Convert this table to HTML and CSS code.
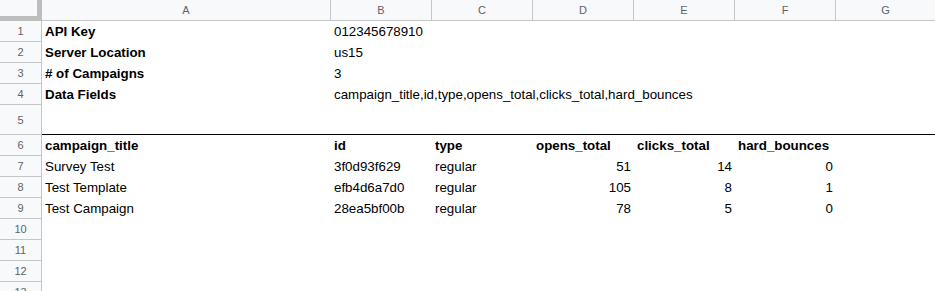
FILE: index.html
```html
<!DOCTYPE html>
<html lang="en">
<head>
    <meta charset="UTF-8">
    <meta name="viewport" content="width=device-width, initial-scale=1.0">
    <title>Campaign Report</title>
    <link rel="stylesheet" href="styles.css">
</head>
<body>
    <div class="sheet">
        <!-- column headers -->
        <div class="corner"></div>
        <div class="col">A</div>
        <div class="col">B</div>
        <div class="col">C</div>
        <div class="col">D</div>
        <div class="col">E</div>
        <div class="col">F</div>
        <div class="col last">G</div>

        <!-- settings -->
        <div class="rh">1</div>
        <div class="cell bold">API Key</div>
        <div class="cell wide">012345678910</div>

        <div class="rh">2</div>
        <div class="cell bold">Server Location</div>
        <div class="cell wide">us15</div>

        <div class="rh">3</div>
        <div class="cell bold"># of Campaigns</div>
        <div class="cell wide">3</div>

        <div class="rh">4</div>
        <div class="cell bold">Data Fields</div>
        <div class="cell wide">campaign_title,id,type,opens_total,clicks_total,hard_bounces</div>

        <div class="rh tall">5</div>
        <div class="cell split full"></div>

        <!-- campaign data -->
        <div class="rh">6</div>
        <div class="cell bold">campaign_title</div>
        <div class="cell bold">id</div>
        <div class="cell bold">type</div>
        <div class="cell bold">opens_total</div>
        <div class="cell bold">clicks_total</div>
        <div class="cell bold">hard_bounces</div>
        <div class="cell"></div>

        <div class="rh">7</div>
        <div class="cell">Survey Test</div>
        <div class="cell">3f0d93f629</div>
        <div class="cell">regular</div>
        <div class="cell num">51</div>
        <div class="cell num">14</div>
        <div class="cell num">0</div>
        <div class="cell"></div>

        <div class="rh">8</div>
        <div class="cell">Test Template</div>
        <div class="cell">efb4d6a7d0</div>
        <div class="cell">regular</div>
        <div class="cell num">105</div>
        <div class="cell num">8</div>
        <div class="cell num">1</div>
        <div class="cell"></div>

        <div class="rh">9</div>
        <div class="cell">Test Campaign</div>
        <div class="cell">28ea5bf00b</div>
        <div class="cell">regular</div>
        <div class="cell num">78</div>
        <div class="cell num">5</div>
        <div class="cell num">0</div>
        <div class="cell"></div>

        <div class="rh">10</div>
        <div class="cell full"></div>
        <div class="rh">11</div>
        <div class="cell full"></div>
        <div class="rh">12</div>
        <div class="cell full"></div>
        <div class="rh">13</div>
        <div class="cell full"></div>
    </div>
</body>
</html>
```

FILE: styles.css
```css
html, body {
    margin: 0;
    padding: 0;
    background-color: #fff;
    overflow: hidden;
}
.sheet {
    display: grid;
    grid-template-columns: 42px 289px repeat(5, 101px) 1fr;
    grid-template-rows: 21px repeat(4, 21px) 30px repeat(8, 21px);
    font-family: "Liberation Sans", Arial, sans-serif;
    font-size: 10pt;
    color: #000;
}
.corner {
    box-sizing: border-box;
    background-color: #f8f9fa;
    border-right: 5px solid #bdbdbd;
    border-bottom: 5px solid #bdbdbd;
}
.col {
    box-sizing: border-box;
    background-color: #f8f9fa;
    border-right: 1px solid #c4c7c5;
    border-bottom: 1px solid #c4c7c5;
    color: #5f6368;
    font-size: 11px;
    line-height: 20px;
    text-align: center;
}
.col.last {
    border-right: none;
}
.rh {
    box-sizing: border-box;
    background-color: #f8f9fa;
    border-right: 1px solid #c4c7c5;
    border-bottom: 1px solid #c4c7c5;
    color: #5f6368;
    font-size: 11px;
    display: flex;
    align-items: center;
    justify-content: center;
}
.cell {
    box-sizing: border-box;
    display: flex;
    align-items: flex-end;
    padding: 0 3px 3px 3px;
    line-height: 15px;
    white-space: nowrap;
    overflow: visible;
}
.bold {
    font-weight: bold;
}
.num {
    justify-content: flex-end;
}
.wide {
    grid-column: span 6;
}
.full {
    grid-column: span 7;
}
.split {
    border-bottom: 1px solid #000;
}
```
